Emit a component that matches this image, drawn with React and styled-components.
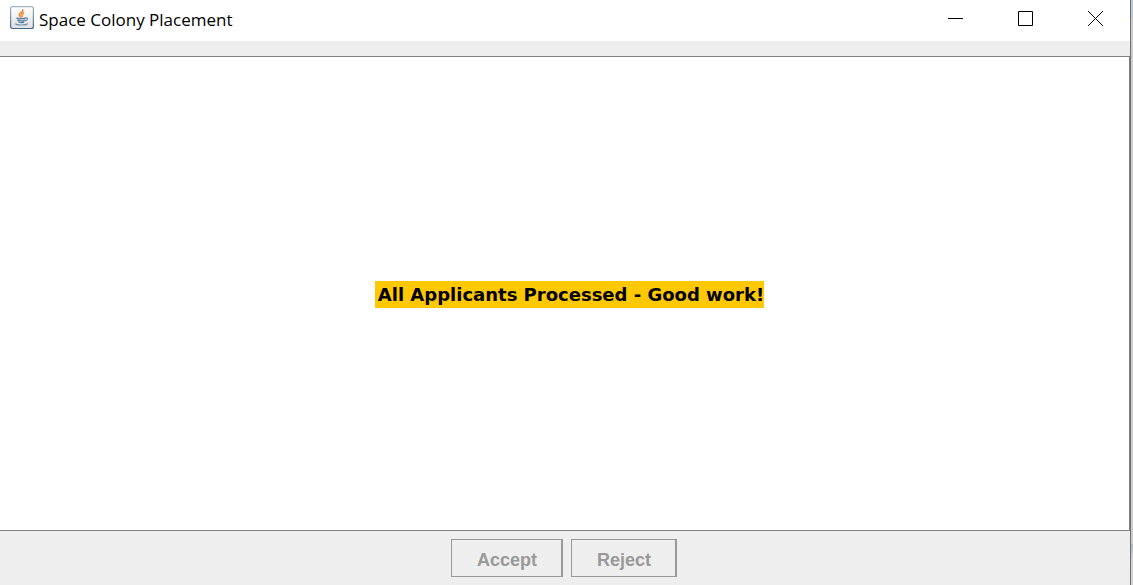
import React from "react";
import styled, { createGlobalStyle } from "styled-components";

const GlobalStyle = createGlobalStyle`
  *, *::before, *::after { box-sizing: border-box; }
  body { margin: 0; background: #ffffff; }
`;

const Desktop = styled.div`
  min-height: 100vh;
  display: flex;
  padding-right: 2px;
  background: linear-gradient(#b9c8d6 0, #b9c8d6 18px, #cdcdcd 18px, #cdcdcd 93%, #b4b8c4 93%, #d2d2d2 96%);
`;

const Window = styled.div`
  flex: 1;
  display: flex;
  flex-direction: column;
  border-right: 1px solid #6e6e6e;
  background: #eeeeee;
`;

const TitleBar = styled.header`
  display: flex;
  align-items: flex-start;
  height: 41px;
  padding-left: 10px;
  background: #ffffff;
`;

const AppIcon = styled.svg`
  flex: none;
  width: 24px;
  height: 24px;
  margin-top: 6px;
`;

const Title = styled.h1`
  flex: 1;
  margin: 0 0 0 5px;
  font: 400 17px/40px "Open Sans", "Noto Sans", sans-serif;
  color: #000000;
  white-space: nowrap;
`;

const Controls = styled.div`
  display: flex;
`;

const ControlButton = styled.button`
  display: flex;
  align-items: center;
  justify-content: center;
  width: 70px;
  height: 37px;
  padding: 0;
  border: 0;
  background: transparent;
`;

const Glyph = styled.svg`
  width: 15px;
  height: 15px;
  fill: none;
  stroke: #000000;
`;

const Content = styled.main`
  flex: 1;
  display: flex;
  align-items: center;
  justify-content: center;
  margin-top: 15px;
  padding: 2px 0 0 10px;
  border: 1px solid #808080;
  border-left: 0;
  background: #ffffff;
`;

const Message = styled.p`
  margin: 0;
  padding-left: 3px;
  background: #ffc800;
  color: #000000;
  font: 700 18px/27px Verdana, "DejaVu Sans", sans-serif;
  white-space: nowrap;
`;

const Actions = styled.footer`
  display: flex;
  justify-content: center;
  gap: 8px;
  padding: 8px 2px 8px 0;
`;

const ActionButton = styled.button`
  height: 38px;
  padding: 3px 24px 0 25px;
  border: 1px solid #999999;
  border-right-width: 2px;
  border-radius: 0;
  background: #eeeeee;
  color: #999999;
  font: 700 18px/34px "Liberation Sans", Arial, sans-serif;
`;

function JavaIcon() {
  return (
    <AppIcon viewBox="0 0 24 24" aria-hidden="true">
      <defs>
        <linearGradient id="tile" x1="0" y1="0" x2="0" y2="1">
          <stop offset="0" stopColor="#ffffff" />
          <stop offset="1" stopColor="#dde1e5" />
        </linearGradient>
        <linearGradient id="edge" x1="0" y1="0" x2="0" y2="1">
          <stop offset="0" stopColor="#9eb3c4" />
          <stop offset="1" stopColor="#456a88" />
        </linearGradient>
      </defs>
      <rect x="0.6" y="0.6" width="22.8" height="21.9" rx="2" fill="url(#tile)" stroke="url(#edge)" strokeWidth="1.2" />
      <g fill="none" strokeLinecap="round">
        <path d="M12.8 4.2c.6 2.2-3.5 2.8-3.5 4.6 0 .9.8 1.2 1.4 1.8" stroke="#ee8a35" strokeWidth="1.9" />
        <path d="M13.6 7c-1.6.6-2.2 1.4-1.5 2.2.5.6.4 1-.2 1.4" stroke="#ee8a35" strokeWidth="1.4" />
        <path d="M6.8 12.2c1.8.7 7.2.7 8.8 0M7.6 14.2c1.9.7 5.4.7 7.1.1M8.6 16c1.4.6 3.8.6 5.2.1" stroke="#587f9f" strokeWidth="1.3" />
        <path d="M15.8 12c2.4-.4 2.1 2.1-.5 2.7" stroke="#6b8dab" strokeWidth="1.2" />
        <path d="M6 17.7c-1.4.8 2.6 1.4 5.8 1.3 3.1 0 5.5-.5 5.4-1.3" stroke="#6b8dab" strokeWidth="1.2" />
      </g>
    </AppIcon>
  );
}

export default function App() {
  return (
    <>
      <GlobalStyle />
      <Desktop>
        <Window>
          <TitleBar>
            <JavaIcon />
            <Title>Space Colony Placement</Title>
            <Controls>
              <ControlButton type="button" aria-label="Minimize">
                <Glyph viewBox="0 0 15 15"><path d="M0 7.5h15" /></Glyph>
              </ControlButton>
              <ControlButton type="button" aria-label="Maximize">
                <Glyph viewBox="0 0 15 15"><path d="M.5.5h14v14H.5z" /></Glyph>
              </ControlButton>
              <ControlButton type="button" aria-label="Close">
                <Glyph viewBox="0 0 15 15"><path d="M0 0l15 15M15 0L0 15" /></Glyph>
              </ControlButton>
            </Controls>
          </TitleBar>
          <Content>
            <Message>All Applicants Processed - Good work!</Message>
          </Content>
          <Actions>
            <ActionButton type="button" disabled>Accept</ActionButton>
            <ActionButton type="button" disabled>Reject</ActionButton>
          </Actions>
        </Window>
      </Desktop>
    </>
  );
}
